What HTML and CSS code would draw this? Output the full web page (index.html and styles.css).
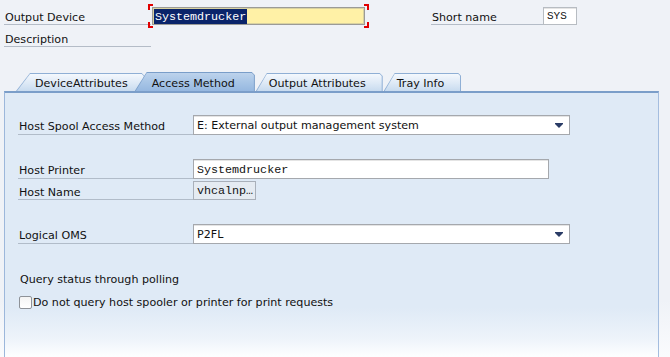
FILE: index.html
```html
<!DOCTYPE html>
<html lang="en">
<head>
  <meta charset="UTF-8" />
  <title>Output Device - Access Method</title>
  <link rel="stylesheet" href="styles.css">
</head>
<body>
  <div class="screen">
    <div class="hdr">
      <div class="row">
        <label class="lbl">Output Device</label>
        <div class="focus">
          <span class="fld key"><span class="sel">Systemdrucker</span></span>
          <i class="corner tl"></i><i class="corner tr"></i>
          <i class="corner bl"></i><i class="corner br"></i>
        </div>
        <label class="lbl short">Short name</label>
        <span class="fld sys">SYS</span>
      </div>
      <div class="row second">
        <label class="lbl">Description</label>
      </div>
    </div>

    <div class="tabs">
      <div class="tab first"><span>DeviceAttributes</span></div>
      <div class="tab active"><span>Access Method</span></div>
      <div class="tab"><span>Output Attributes</span></div>
      <div class="tab"><span>Tray Info</span></div>
    </div>

    <div class="panel">
      <div class="frow">
        <label class="flabel">Host Spool Access Method</label>
        <div class="fld drop wide">E: External output management system<i class="arrow"></i></div>
      </div>

      <div class="frow gap">
        <label class="flabel">Host Printer</label>
        <div class="fld mono printer">Systemdrucker</div>
      </div>
      <div class="frow tight">
        <label class="flabel short-row">Host Name</label>
        <div class="fld mono ro">vhcalnp…</div>
      </div>

      <div class="frow gap">
        <label class="flabel">Logical OMS</label>
        <div class="fld drop wide">P2FL<i class="arrow"></i></div>
      </div>

      <div class="group">Query status through polling</div>
      <label class="check"><span class="box"></span>Do not query host spooler or printer for print requests</label>
    </div>
  </div>
</body>
</html>
```

FILE: styles.css
```css
html, body {
  margin: 0;
  height: 100%;
  overflow: hidden;
}
body {
  font-family: "DejaVu Sans", Verdana, sans-serif;
  font-size: 11.1px;
  color: #111;
  background: linear-gradient(to bottom, #eff2f7 0, #eff2f7 300px, #fafbfd 357px);
}
.screen {
  height: 357px;
  display: flex;
  flex-direction: column;
}

/* header fields */
.hdr {
  padding: 7px 0 0 4px;
}
.row {
  display: flex;
  align-items: flex-end;
}
.row.second {
  margin-top: 4px;
}
.lbl {
  width: 146px;
  height: 15px;
  padding: 2px 0 0 1px;
  line-height: 17px;
  border-bottom: 1px solid #b4bcc7;
}
.lbl.short {
  width: 111px;
  margin-left: 66px;
}
.fld {
  box-sizing: border-box;
  height: 18px;
  border: 1px solid #a5a8ad;
  background: #fff;
  box-shadow: inset 0 1px 0 #e4e4e4;
  white-space: nowrap;
  overflow: hidden;
}
.focus {
  position: relative;
  margin-left: 1px;
}
.key {
  display: block;
  width: 213px;
  background: #fff1a6;
  border-color: #9b9b97;
  box-shadow: inset 0 0 0 1px #d9d2a0;
  padding: 1px 0 0 1px;
}
.sel {
  display: inline-block;
  height: 15px;
  line-height: 16px;
  padding: 0 1px;
  background: #0a246a;
  color: #fff;
  font-family: "Liberation Mono", "Courier New", monospace;
  font-size: 11.7px;
}
.corner {
  position: absolute;
  width: 3px;
  height: 4px;
  border: 0 solid #e00000;
}
.corner.tl { left: -4px; top: -3px; border-width: 2px 0 0 2px; }
.corner.tr { right: -4px; top: -3px; border-width: 2px 2px 0 0; }
.corner.bl { left: -4px; bottom: -3px; border-width: 0 0 2px 2px; }
.corner.br { right: -4px; bottom: -3px; border-width: 0 2px 2px 0; }
.sys {
  width: 34px;
  padding-left: 3px;
  line-height: 17px;
  font-family: "Liberation Mono", "Courier New", monospace;
  font-size: 11px;
  border-color: #b7bcc2;
}

/* tab strip */
.tabs {
  display: flex;
  align-items: flex-end;
  height: 19px;
  margin-top: 25px;
  padding-left: 16px;
}
.tab {
  position: relative;
  height: 18px;
  line-height: 21px;
  padding: 0 17px 0 13px;
  background: #8fafd5;
  clip-path: polygon(11px 0, calc(100% - 3px) 0, 100% 3px, 100% 100%, 0 100%);
  margin-left: 1px;
}
.tab::before {
  content: "";
  position: absolute;
  inset: 1px 1px 0 1px;
  background: linear-gradient(to bottom, #f4f8fd 0, #dde9f6 55%, #c8dbef 100%);
  clip-path: polygon(10px 0, calc(100% - 2px) 0, 100% 2px, 100% 100%, 0 100%);
}
.tab span {
  position: relative;
}
.tab.first {
  margin-left: 0;
  padding-left: 19px;
  clip-path: polygon(14px 0, calc(100% - 3px) 0, 100% 3px, 100% 100%, 0 100%);
}
.tab.first::before {
  clip-path: polygon(13px 0, calc(100% - 2px) 0, 100% 2px, 100% 100%, 0 100%);
}
.tab.active {
  z-index: 1;
  height: 19px;
  line-height: 23px;
  margin-left: -10px;
  padding: 0 20px 0 17px;
  background: #7a9ec9;
  clip-path: polygon(12px 0, calc(100% - 3px) 0, 100% 3px, 100% 100%, 0 100%);
}
.tab.active::before {
  background: linear-gradient(to bottom, #bdd3ec 0, #a8c5e6 50%, #96b8e0 100%);
  clip-path: polygon(11px 0, calc(100% - 2px) 0, 100% 2px, 100% 100%, 0 100%);
}

/* tab page */
.panel {
  flex: 1;
  width: 655px;
  margin-left: 4px;
  padding: 22px 0 0 13px;
  box-sizing: border-box;
  border-top: 2px solid #7b9ec9;
  border-left: 1px solid #9cb7db;
  border-right: 1px solid #a4bddf;
  background: linear-gradient(to bottom, #dfeaf6 0, #dfeaf6 215px, #edf3fa 245px, #fdfeff 263px);
}
.frow {
  display: flex;
  align-items: flex-end;
}
.frow.gap {
  margin-top: 24px;
}
.frow.tight {
  margin-top: 2px;
}
.flabel {
  width: 174px;
  height: 17px;
  padding: 2px 0 0 1px;
  line-height: 20px;
  border-bottom: 1px solid #b1bcc9;
}
.flabel.short-row {
  height: 16px;
  line-height: 19px;
}
.frow .fld {
  height: 20px;
  line-height: 20px;
  padding-left: 3px;
}
.frow.tight .fld {
  height: 19px;
  line-height: 19px;
}
.drop {
  position: relative;
}
.wide {
  width: 377px;
}
.printer {
  width: 356px;
}
.mono {
  font-family: "Liberation Mono", "Courier New", monospace;
  font-size: 11.7px;
}
.ro {
  width: 63px;
  padding-left: 2px;
  background: #e5ebf2;
  border-color: #a9b0ba;
  box-shadow: none;
}
.arrow {
  position: absolute;
  right: 6px;
  top: 8px;
  width: 0;
  height: 0;
  border-left: 4px solid transparent;
  border-right: 4px solid transparent;
  border-top: 4px solid #2a3c66;
}
.arrow::before {
  content: "";
  position: absolute;
  left: -4px;
  top: -5px;
  width: 8px;
  height: 1px;
  background: #2a3c66;
}
.group {
  margin: 27px 0 0 2px;
  height: 18px;
  line-height: 18px;
}
.check {
  display: flex;
  align-items: center;
  margin-top: 4px;
  height: 18px;
}
.box {
  box-sizing: border-box;
  width: 13px;
  height: 13px;
  margin: 0 1px 0 1px;
  border: 1px solid #8e9298;
  border-radius: 2px;
  background: linear-gradient(to bottom, #f4f4f4, #fff);
}
```
